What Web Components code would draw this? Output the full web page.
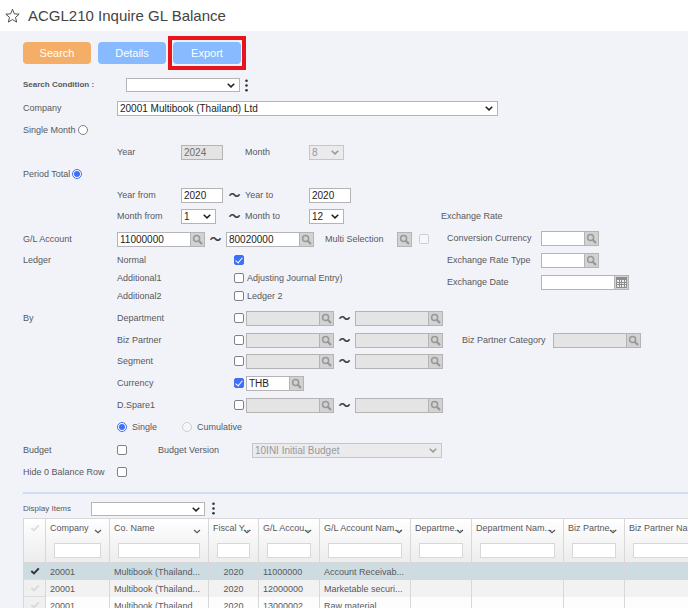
<!DOCTYPE html>
<html lang="en">
<head>
<meta charset="utf-8">
<title>ACGL210 Inquire GL Balance</title>
<style>
  html { height: 100%; }
  body {
    margin: 0; height: 100%; overflow: hidden;
    font: 9px/12px "Liberation Sans", Arial, sans-serif;
    color: #58585c; background: #f2f3f9;
  }
  .period { --label: 64px; width: 107px; }
  .year { --control: 42px; }
  .month { --control: 35px; }
  .apart { margin-left: 21px; }
  .wide { --label: 94px; --control: 381px; }
  .saved { --control: 114px; --height: 14px; font-size: 8px; }
  .condition { --label: 103px; font-weight: bold; }
  .display { --label: 68px; }
  .lookup { --control: 88px; }
  .short { --control: 58px; }
  .dimension { --label: 117px; margin-right: 2px; }
  .flag { --label: 94px; }
  .multi { --label: 72px; margin: 0 7px 0 11px; }
  .category { --label: 91px; margin-left: 19px; }
  .rate { --label: 94px; margin-left: 6px; }
  .version { --label: 94px; --control: 190px; margin-left: 31px; }
  .cumulative { margin-left: 25px; }
</style>
</head>
<body>
<inquiry-page>
  <page-title slot="title">ACGL210 Inquire GL Balance</page-title>

  <action-bar slot="actions">
    <action-button tone="primary">Search</action-button>
    <action-button>Details</action-button>
    <action-button marked>Export</action-button>
  </action-bar>

  <form-row plain size="24">
    <form-field class="saved condition" kind="select" label="Search Condition :"></form-field>
    <more-button label="Search condition options"></more-button>
  </form-row>
  <form-row plain size="22">
    <form-field class="wide" kind="select" label="Company" value="20001 Multibook (Thailand) Ltd"></form-field>
  </form-row>
  <form-row plain size="22"><form-field kind="radio" label="Single Month"></form-field></form-row>
  <form-row size="22">
    <form-field class="period year" kind="text" label="Year" value="2024" disabled></form-field>
    <form-field class="period month apart" kind="select" label="Month" value="8" disabled></form-field>
  </form-row>
  <form-row plain size="22"><form-field kind="radio" label="Period Total" checked></form-field></form-row>
  <form-row size="20">
    <form-field class="period year" kind="text" label="Year from" value="2020"></form-field>
    <range-mark></range-mark>
    <form-field class="period year" kind="text" label="Year to" value="2020"></form-field>
  </form-row>

  <split-section>
    <form-row size="22">
      <form-field class="period month" kind="select" label="Month from" value="1"></form-field>
      <range-mark></range-mark>
      <form-field class="period month" kind="select" label="Month to" value="12"></form-field>
    </form-row>
    <form-row size="24" label="G/L Account">
      <form-field class="lookup" kind="lookup" name="G/L Account from" value="11000000"></form-field>
      <range-mark></range-mark>
      <form-field class="lookup" kind="lookup" name="G/L Account to" value="80020000"></form-field>
      <form-field class="multi" kind="icon" label="Multi Selection"></form-field>
      <form-field kind="check" name="Use multi selection" disabled></form-field>
    </form-row>
    <form-row size="18" label="Ledger">
      <form-field class="dimension" kind="check" label="Normal" checked></form-field>
    </form-row>
    <form-row size="18"><form-field class="dimension" kind="check" label="Additional1" suffix="Adjusting Journal Entry)"></form-field></form-row>
    <form-row size="18"><form-field class="dimension" kind="check" label="Additional2" suffix="Ledger 2"></form-field></form-row>

    <form-row slot="side" plain size="22">Exchange Rate</form-row>
    <form-row slot="side" plain size="22"><form-field class="rate short" kind="lookup" label="Conversion Currency"></form-field></form-row>
    <form-row slot="side" plain size="22"><form-field class="rate short" kind="lookup" label="Exchange Rate Type"></form-field></form-row>
    <form-row slot="side" plain size="22"><form-field class="rate lookup" kind="date" label="Exchange Date"></form-field></form-row>
  </split-section>

  <form-row size="24" label="By">
    <form-field class="dimension" kind="check" label="Department"></form-field>
    <form-field class="lookup" kind="lookup" name="Department from" disabled></form-field>
    <range-mark></range-mark>
    <form-field class="lookup" kind="lookup" name="Department to" disabled></form-field>
  </form-row>
  <form-row size="20">
    <form-field class="dimension" kind="check" label="Biz Partner"></form-field>
    <form-field class="lookup" kind="lookup" name="Biz Partner from" disabled></form-field>
    <range-mark></range-mark>
    <form-field class="lookup" kind="lookup" name="Biz Partner to" disabled></form-field>
    <form-field class="lookup category" kind="lookup" label="Biz Partner Category" disabled></form-field>
  </form-row>
  <form-row size="22">
    <form-field class="dimension" kind="check" label="Segment"></form-field>
    <form-field class="lookup" kind="lookup" name="Segment from" disabled></form-field>
    <range-mark></range-mark>
    <form-field class="lookup" kind="lookup" name="Segment to" disabled></form-field>
  </form-row>
  <form-row size="22">
    <form-field class="dimension" kind="check" label="Currency" checked></form-field>
    <form-field class="short" kind="lookup" name="Currency code" value="THB"></form-field>
  </form-row>
  <form-row size="22">
    <form-field class="dimension" kind="check" label="D.Spare1"></form-field>
    <form-field class="lookup" kind="lookup" name="D.Spare1 from" disabled></form-field>
    <range-mark></range-mark>
    <form-field class="lookup" kind="lookup" name="D.Spare1 to" disabled></form-field>
  </form-row>
  <form-row size="22">
    <form-field kind="radio" suffix="Single" checked></form-field>
    <form-field class="cumulative" kind="radio" suffix="Cumulative" disabled></form-field>
  </form-row>
  <form-row plain size="24">
    <form-field class="flag" kind="check" label="Budget"></form-field>
    <form-field class="version" kind="select" label="Budget Version" value="10INI Initial Budget" disabled></form-field>
  </form-row>
  <form-row plain size="20"><form-field class="flag" kind="check" label="Hide 0 Balance Row"></form-field></form-row>

  <balance-grid slot="results">
    <form-field class="saved display" kind="select" label="Display Items"></form-field>
    <more-button label="Display item options"></more-button>
  </balance-grid>
</inquiry-page>

<script>
  const CHEVRON = '<svg class="chev" viewBox="0 0 8 5" aria-hidden="true"><path d="M.7.8 4 3.9 7.3.8" fill="none" stroke="currentColor" stroke-width="1.5"/></svg>';
  const THIN_CHEVRON = '<svg class="chev" viewBox="0 0 8 5" aria-hidden="true"><path d="M1 1 4 3.8 7 1" fill="none" stroke="currentColor" stroke-width="1.2"/></svg>';
  const LENS = '<svg viewBox="0 0 11 11" width="11" height="11" aria-hidden="true"><circle cx="4.6" cy="4.6" r="3" fill="none" stroke="#989898" stroke-width="1.5"/><path d="M7.2 7.2 9.4 9.4" stroke="#989898" stroke-width="2.2" stroke-linecap="round"/></svg>';
  const CALENDAR = '<svg viewBox="0 0 11 11" width="11" height="11" aria-hidden="true"><path d="M0 0h11v11H0z" fill="#8d8d8d"/><path d="M1 3h2v2H1zM4 3h1v2H4zM6 3h2v2H6zM9 3h1v2H9zM1 6h2v1H1zM4 6h1v1H4zM6 6h2v1H6zM9 6h1v1H9zM1 8h2v2H1zM4 8h1v2H4zM6 8h2v2H6zM9 8h1v2H9z" fill="#eee"/></svg>';
  const TICK = c => `<svg viewBox="0 0 10 8" width="10" height="8" aria-hidden="true"><path d="M1.3 4 4 6.4 8.8 1.4" fill="none" stroke="${c}" stroke-width="2"/></svg>`;

  class Base extends HTMLElement {
    connectedCallback() {
      if (this.shadowRoot) return;
      this.attachShadow({ mode: 'open' }).innerHTML = this.render();
    }
    attr(name) { return this.getAttribute(name) || ''; }
  }

  customElements.define('inquiry-page', class extends Base {
    render() { return `
      <style>
        :host { display: flex; flex-direction: column; height: 100%; }
        form { margin: 0; padding: 0 0 10px 23px; }
        hr { margin: 0 0 0 23px; border: 0; height: 2px; flex: none; background: #cfdef5; }
        ::slotted([slot=results]) { flex: 1; min-height: 0; }
      </style>
      <slot name="title"></slot>
      <form><slot name="actions"></slot><slot></slot></form>
      <hr>
      <slot name="results"></slot>`; }
  });

  customElements.define('page-title', class extends Base {
    render() { return `
      <style>
        :host { display: flex; align-items: center; gap: 8px; height: 31px; padding-left: 5px; background: #fff; color: #444; flex: none; }
        h1 { margin: 0; font: 15px/20px "Liberation Sans", Arial, sans-serif; }
        button { border: 0; padding: 0; background: none; display: flex; }
      </style>
      <button type="button" aria-label="Add to favourites"><svg viewBox="0 0 16 15" width="15" height="15"><path d="M8 .9 10 5.7l5.1.4-3.9 3.4 1.2 5L8 11.8l-4.4 2.7 1.2-5L.9 6.1 6 5.7z" fill="none" stroke="#444"/></svg></button>
      <h1><slot></slot></h1>`; }
  });

  customElements.define('action-bar', class extends Base {
    render() { return `<style>:host { display: flex; gap: 7px; padding: 11px 0 9px; }</style><slot></slot>`; }
  });

  customElements.define('action-button', class extends Base {
    render() { return `
      <style>
        :host { display: block; position: relative; }
        button { display: block; width: 68px; height: 22px; padding: 0; border: 0; border-radius: 4px; background: #87bafe; color: #fff; font: 11px/20px "Liberation Sans", Arial, sans-serif; }
        :host([tone=primary]) button { background: #f4ae67; }
        :host([marked])::after { content: ""; position: absolute; inset: -6px -5px; border: 4px solid #e8141c; pointer-events: none; }
      </style>
      <button type="button"><slot></slot></button>`; }
  });

  customElements.define('form-row', class extends Base {
    render() { return `
      <style>
        :host { display: flex; align-items: center; height: ${this.attr('size')}px; white-space: nowrap; }
        span { width: 94px; flex: none; }
      </style>
      ${this.hasAttribute('plain') ? '' : `<span>${this.attr('label')}</span>`}<slot></slot>`; }
  });

  customElements.define('split-section', class extends Base {
    render() { return `
      <style>:host { display: grid; grid-template-columns: 418px 1fr; align-items: start; padding-bottom: 1px; }</style>
      <div><slot></slot></div><div><slot name="side"></slot></div>`; }
  });

  customElements.define('range-mark', class extends Base {
    render() { return `
      <style>:host { width: 21px; flex: none; text-align: center; color: #444; font: bold 12px/14px "Noto Sans CJK JP", sans-serif; }</style>～`; }
  });

  customElements.define('more-button', class extends Base {
    render() { return `
      <style>:host { display: flex; margin-left: 4px; } button { display: flex; border: 0; padding: 0; background: none; }</style>
      <button type="button" aria-label="${this.attr('label')}"><svg width="5" height="13" viewBox="0 0 5 13"><g fill="#333"><circle cx="2.5" cy="1.8" r="1.3"/><circle cx="2.5" cy="6.5" r="1.3"/><circle cx="2.5" cy="11.2" r="1.3"/></g></svg></button>`; }
  });

  customElements.define('form-field', class extends Base {
    control() {
      const off = this.hasAttribute('disabled') ? ' disabled' : '';
      const on = this.hasAttribute('checked') ? ' checked' : '';
      const name = this.attr('name');
      const aria = name ? ` aria-label="${name}"` : '';
      const text = `<input id="c" type="text" value="${this.attr('value')}"${aria}${off}>`;
      switch (this.attr('kind')) {
        case 'text': return `<div class="box">${text}</div>`;
        case 'select': return `<div class="box pick"><select id="c"${off}><option>${this.attr('value')}</option></select>${CHEVRON}</div>`;
        case 'lookup': return `<div class="box">${text}<button type="button" aria-label="Look up ${name || this.attr('label')}"${off}>${LENS}</button></div>`;
        case 'date': return `<div class="box">${text}<button type="button" aria-label="Open calendar">${CALENDAR}</button></div>`;
        case 'icon': return `<button id="c" class="alone" type="button">${LENS}</button>`;
        case 'radio': return `<input id="c" type="radio"${on}${off}>`;
        default: return `<input id="c" type="checkbox"${aria}${on}${off}>`;
      }
    }
    render() {
      const label = this.attr('label'), suffix = this.attr('suffix');
      return `
      <style>
        :host { display: flex; align-items: center; flex: none; }
        * { box-sizing: border-box; }
        label { flex: none; white-space: nowrap; }
        .before { width: var(--label, auto); }
        .box { display: flex; width: var(--control); height: var(--height, 15px); border: 1px solid #b4b4b4; background: #fff; color: #222; flex: none; }
        :host([disabled]) .box { background: #e4e4e4; }
        .box input, select { flex: 1; min-width: 0; width: 100%; height: 100%; margin: 0; border: 0; padding: 0 2px; background: none; color: inherit; opacity: 1; font: 10px/13px "Liberation Sans", Arial, sans-serif; }
        .pick { display: grid; align-items: center; }
        .pick > * { grid-area: 1 / 1; }
        select { appearance: none; padding: 0 16px 0 2px; }
        .chev { width: 8px; height: 5px; justify-self: end; margin-right: 4px; pointer-events: none; }
        :host([disabled]) .box { color: #6e6e6e; }
        :host([disabled]) .pick { color: #999; background: #ebebee; border-color: #c6c6c8; }
        button { display: flex; align-items: center; justify-content: center; width: 14px; flex: none; border: 0; border-left: 1px solid #b4b4b4; padding: 0; background: #d2d2d2; }
        .alone { width: 15px; height: 15px; border: 1px solid #b4b4b4; }
        [type=checkbox], [type=radio] { appearance: none; display: grid; place-items: center; width: 10px; height: 10px; margin: 0; border: 1px solid #808086; border-radius: 2px; background: #fff; flex: none; }
        [type=radio] { border-radius: 50%; }
        .before + [type=radio] { margin-left: 2px; }
        [type=checkbox]:checked { border-color: #3f6ef7; background: #3f6ef7; }
        [type=checkbox]:checked::after { content: ""; width: 3px; height: 6px; margin-bottom: 2px; border: solid #fff; border-width: 0 1px 1px 0; rotate: 40deg; }
        [type=radio]:checked { border-color: #3f6ef7; }
        [type=radio]:checked::after { content: ""; width: 6px; height: 6px; border-radius: 50%; background: #3f6ef7; }
        [type=checkbox]:disabled, [type=radio]:disabled { border-color: #cfcfd2; background: #f6f6f8; }
        .after { padding-left: 3px; }
        [type=radio] + .after { padding-left: 5px; }
      </style>
      ${label ? `<label class="before" for="c">${label}</label>` : ''}${this.control()}${suffix ? `<label class="after" for="c">${suffix}</label>` : ''}`;
    }
  });

  customElements.define('balance-grid', class extends Base {
    render() {
      const columns = [
        ['Company', 64], ['Co. Name', 99], ['Fiscal Y...', 50], ['G/L Accou...', 61], ['G/L Account Nam...', 91],
        ['Departme...', 61], ['Department Nam...', 92], ['Biz Partne...', 61], ['Biz Partner Name', 92]
      ];
      const rows = [
        ['20001', 'Multibook (Thailand...', '2020', '11000000', 'Account Receivab...', '', '', '', ''],
        ['20001', 'Multibook (Thailand...', '2020', '12000000', 'Marketable securi...', '', '', '', ''],
        ['20001', 'Multibook (Thailand...', '2020', '13000002', 'Raw material', '', '', '', '']
      ];
      return `
      <style>
        :host { display: flex; flex-direction: column; padding-left: 23px; overflow: hidden; }
        * { box-sizing: border-box; }
        .bar { display: flex; align-items: center; gap: 2px; height: 24px; padding-top: 5px; flex: none; }
        .view { overflow: hidden; border-top: 1px solid #d8d8da; border-left: 1px solid #d8d8da; }
        table { table-layout: fixed; width: 693px; border-collapse: separate; border-spacing: 0; }
        th, td { padding: 0 4px; border-right: 1px solid #d8d8da; overflow: hidden; white-space: nowrap; text-align: left; font-weight: normal; }
        thead { background: linear-gradient(#fff, #ececec); }
        th { position: relative; height: 44px; padding-top: 3px; vertical-align: top; border-bottom: 1px solid #d8d8da; }
        th .chev { position: absolute; top: 10px; right: 7px; width: 8px; height: 5px; }
        th input { display: block; width: calc(100% - 8px); height: 15px; margin: 9px 4px 0; border: 1px solid #d8d8da; padding: 0 2px; background: #fff; font: inherit; }
        td { height: 17px; }
        tbody tr { background: #fdfdfd; }
        tbody tr:nth-child(2) { background: #f2f2f2; }
        tbody tr:nth-child(1) { background: #cddce1; }
        td:nth-child(4) { text-align: center; }
        .sel { text-align: center; padding: 0; }
        td.sel { border-bottom: 1px solid #dcdcdc; background: #f0f0f0; }
        tr:nth-child(1) td.sel { background: #cddce1; }
        .sel svg { display: block; margin: 0 auto; }
        th.sel svg { margin-top: 5px; }
      </style>
      <div class="bar"><slot></slot></div>
      <div class="view"><table>
        <colgroup><col style="width:22px">${columns.map(c => `<col style="width:${c[1]}px">`).join('')}</colgroup>
        <thead><tr><th class="sel">${TICK('#dedede')}</th>${columns.map(c => `<th>${c[0]}${THIN_CHEVRON}<input type="text" aria-label="Filter ${c[0]}"></th>`).join('')}</tr></thead>
        <tbody>${rows.map((r, i) => `<tr><td class="sel">${TICK(i ? '#dadada' : '#333')}</td>${r.map(v => `<td>${v}</td>`).join('')}</tr>`).join('')}</tbody>
      </table></div>`;
    }
  });
</script>
</body>
</html>
